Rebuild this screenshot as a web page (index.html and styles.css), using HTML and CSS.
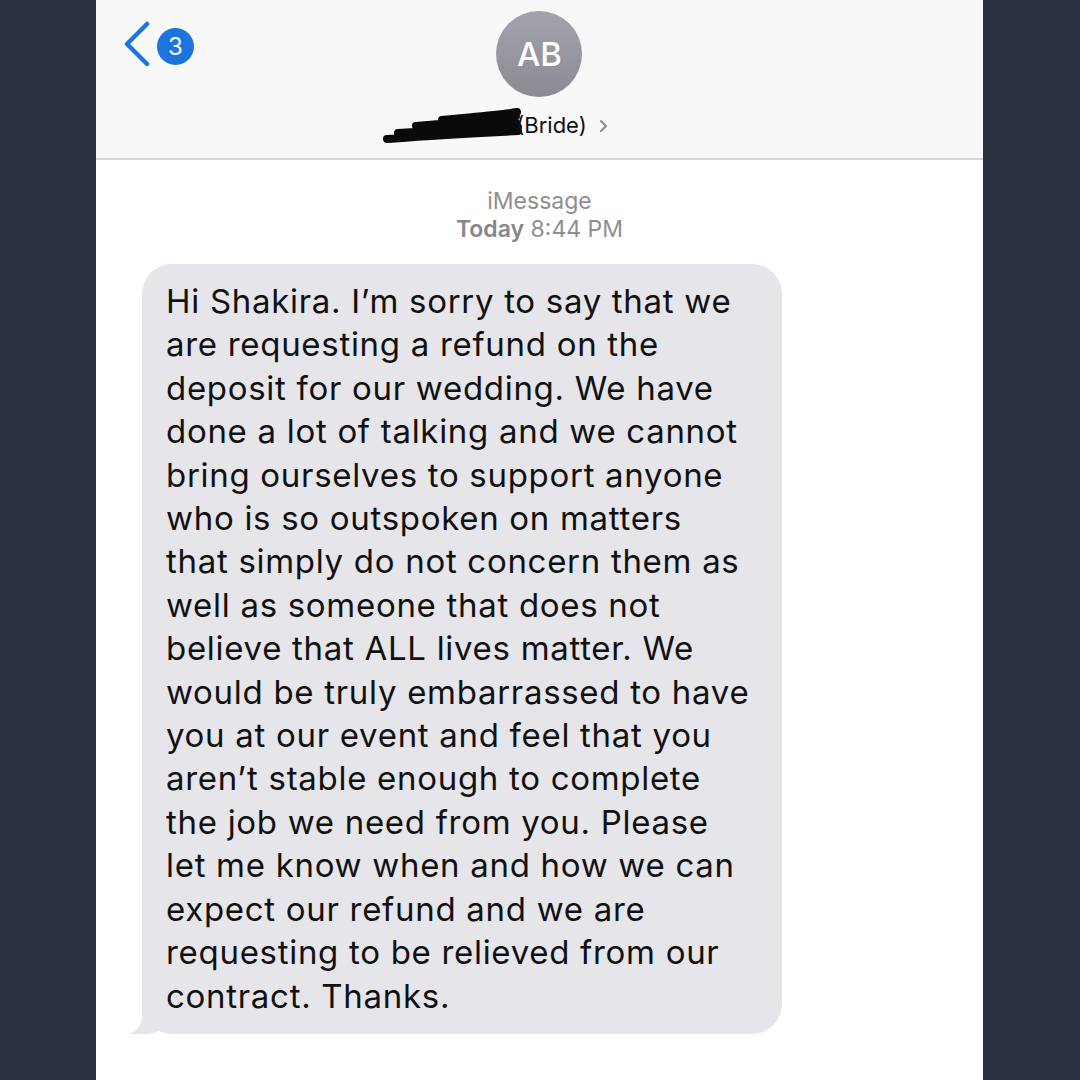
FILE: index.html
```html
<!DOCTYPE html>
<html>
<head>
<meta charset="utf-8">
<link rel="stylesheet" href="styles.css">
</head>
<body>
<div class="screen">
  <header class="header">
    <div class="back">
      <svg class="chev" width="30" height="46" viewBox="0 0 30 46"><path d="M25 3 L5 23 L25 43" fill="none" stroke="#1d74de" stroke-width="4.5" stroke-linecap="round" stroke-linejoin="round"/></svg>
      <span class="badge">3</span>
    </div>
    <div class="contact">
      <div class="avatar">AB</div>
      <div class="name">
        <span class="redact"><svg width="140" height="38" viewBox="0 0 140 38"><path d="M5 32 C40 29 80 27 136 24 M16 26 C60 23 100 19 134 16 M34 19 C80 15 110 12 134 9 M24 29 C70 26 110 24 136 20 M60 13 C90 10 120 8 135 5" fill="none" stroke="#0a0a0a" stroke-width="8" stroke-linecap="round"/></svg></span><span class="bride">(Bride)</span><svg class="caret" width="10" height="16" viewBox="0 0 10 16"><path d="M2 3 L7 8 L2 13" fill="none" stroke="#8e8e93" stroke-width="2.2" stroke-linecap="round" stroke-linejoin="round"/></svg>
      </div>
    </div>
  </header>
  <main class="thread">
    <div class="meta">
      <div class="service">iMessage</div>
      <div class="time"><b>Today</b> 8:44 PM</div>
    </div>
    <div class="bubble">
      Hi Shakira. I’m sorry to say that we<br>
      are requesting a refund on the<br>
      deposit for our wedding. We have<br>
      done a lot of talking and we cannot<br>
      bring ourselves to support anyone<br>
      who is so outspoken on matters<br>
      that simply do not concern them as<br>
      well as someone that does not<br>
      believe that ALL lives matter. We<br>
      would be truly embarrassed to have<br>
      you at our event and feel that you<br>
      aren’t stable enough to complete<br>
      the job we need from you. Please<br>
      let me know when and how we can<br>
      expect our refund and we are<br>
      requesting to be relieved from our<br>
      contract. Thanks.
    </div>
  </main>
</div>
</body>
</html>
```

FILE: styles.css
```css
html, body {
  margin: 0;
  padding: 0;
}
body {
  background: #29323d;
  width: 1080px;
  height: 1080px;
  overflow: hidden;
  font-family: Inter, "Liberation Sans", Arial, sans-serif;
}
.screen {
  margin-left: 96px;
  width: 887px;
  height: 1080px;
  background: #ffffff;
  display: flex;
  flex-direction: column;
}
.header {
  height: 158px;
  background: #f8f8f8;
  border-bottom: 2px solid #d6d6d8;
  position: relative;
  display: flex;
  justify-content: center;
}
.back {
  position: absolute;
  left: 26px;
  top: 21px;
  display: flex;
  align-items: center;
  gap: 5px;
}
.badge {
  width: 37px;
  height: 37px;
  border-radius: 50%;
  background: #1e74de;
  color: #fff;
  font-size: 24px;
  display: flex;
  align-items: center;
  justify-content: center;
  margin-top: 4px;
}
.contact {
  display: flex;
  flex-direction: column;
  align-items: center;
  padding-top: 11px;
}
.avatar {
  width: 86px;
  height: 86px;
  border-radius: 50%;
  background: linear-gradient(#a3a4ab, #8a8b93);
  color: #fff;
  font-size: 33px;
  font-weight: 500;
  display: flex;
  align-items: center;
  justify-content: center;
}
.name {
  margin-top: 8px;
  display: flex;
  align-items: center;
  font-size: 22px;
  color: #111;
  margin-left: -88px;
}
.redact {
  display: flex;
  margin-right: -6px;
  margin-top: 2px;
}
.caret {
  margin-left: 12px;
  margin-top: 2px;
}
.thread {
  flex: 1;
  display: flex;
  flex-direction: column;
}
.meta {
  text-align: center;
  color: #8e8e93;
  font-size: 23px;
  line-height: 28px;
  padding-top: 27px;
}
.time b {
  font-weight: 600;
  color: #86868b;
}
.bubble {
  position: relative;
  align-self: flex-start;
  margin-left: 46px;
  margin-top: 21px;
  width: 640px;
  box-sizing: border-box;
  background: #e6e5ea;
  border-radius: 30px;
  padding: 16px 20px 16px 24px;
  font-size: 33px;
  line-height: 43.4px;
  letter-spacing: 0.7px;
  color: #111;
  white-space: nowrap;
}
.bubble::before {
  content: "";
  position: absolute;
  left: -14px;
  bottom: 0;
  width: 40px;
  height: 30px;
  background: #e6e5ea;
  border-bottom-right-radius: 22px 18px;
}
.bubble::after {
  content: "";
  position: absolute;
  left: -40px;
  bottom: 0;
  width: 40px;
  height: 30px;
  background: #ffffff;
  border-bottom-right-radius: 16px 18px;
}
```
